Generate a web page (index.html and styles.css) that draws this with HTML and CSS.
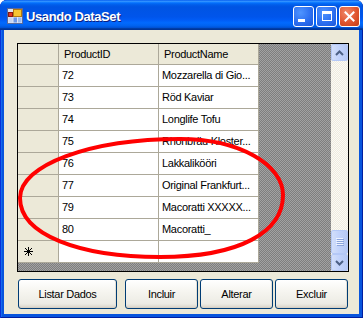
FILE: index.html
```html
<!DOCTYPE html>
<html>
<head>
<meta charset="utf-8">
<title>Usando DataSet</title>
<link rel="stylesheet" href="styles.css">
</head>
<body>
<div class="window">
  <div class="titlebar">
    <svg class="appicon" width="16" height="16" viewBox="0 0 16 16">
      <rect x="0.5" y="0.5" width="15" height="15" fill="#dfe6f5" stroke="#5a6a9a"/>
      <rect x="6.5" y="1.5" width="8" height="7" fill="#f7c531" stroke="#b47a10"/>
      <rect x="1.5" y="4.5" width="4" height="4" fill="#e2341f" stroke="#8a1a10"/>
      <rect x="6.5" y="9.5" width="3.5" height="5" fill="#6f97e6"/>
      <rect x="11" y="9.5" width="3.5" height="5" fill="#9cbcf2"/>
      <rect x="1.5" y="9.5" width="4" height="5" fill="#c9d6f2"/>
    </svg>
    <span class="title">Usando DataSet</span>
    <div class="tbtns">
      <div class="tbtn"><span class="g-min"></span></div>
      <div class="tbtn"><span class="g-max"></span></div>
      <div class="tbtn close">
        <svg width="11" height="11" viewBox="0 0 11 11"><path d="M1.5 1.5L9.5 9.5M9.5 1.5L1.5 9.5" stroke="#fff" stroke-width="2" stroke-linecap="square"/></svg>
      </div>
    </div>
  </div>
  <div class="client">
    <div class="grid">
      <div class="view">
        <div class="table">
          <div class="row head"><div class="rh"></div><div class="c">ProductID</div><div class="c">ProductName</div></div>
          <div class="row"><div class="rh"></div><div class="c">72</div><div class="c">Mozzarella di Gio...</div></div>
          <div class="row"><div class="rh"></div><div class="c">73</div><div class="c">Röd Kaviar</div></div>
          <div class="row"><div class="rh"></div><div class="c">74</div><div class="c">Longlife Tofu</div></div>
          <div class="row"><div class="rh"></div><div class="c">75</div><div class="c">Rhönbräu Kloster...</div></div>
          <div class="row"><div class="rh"></div><div class="c">76</div><div class="c">Lakkalikööri</div></div>
          <div class="row"><div class="rh"></div><div class="c">77</div><div class="c">Original Frankfurt...</div></div>
          <div class="row"><div class="rh"></div><div class="c">79</div><div class="c">Macoratti XXXXX...</div></div>
          <div class="row"><div class="rh"></div><div class="c">80</div><div class="c">Macoratti_</div></div>
          <div class="row"><div class="rh">
            <svg class="star" width="9" height="9" viewBox="0 0 9 9"><path d="M4.5 0V9M0 4.5H9M1 1L8 8M8 1L1 8" stroke="#000" stroke-width="1"/></svg>
          </div><div class="c"></div><div class="c"></div></div>
        </div>
      </div>
      <div class="vscroll">
        <div class="sbtn">
          <svg width="9" height="6" viewBox="0 0 9 6"><path d="M1 5L4.5 1.5L8 5" fill="none" stroke="#4d6185" stroke-width="2"/></svg>
        </div>
        <div class="track"></div>
        <div class="thumb">
          <svg width="8" height="8" viewBox="0 0 8 8"><path d="M0 0.5H7M0 2.5H7M0 4.5H7M0 6.5H7" stroke="#eef3ff" stroke-width="1"/><path d="M1 1.5H8M1 3.5H8M1 5.5H8M1 7.5H8" stroke="#8ca5dc" stroke-width="1"/></svg>
        </div>
        <div class="sbtn">
          <svg width="9" height="6" viewBox="0 0 9 6"><path d="M1 1L4.5 4.5L8 1" fill="none" stroke="#4d6185" stroke-width="2"/></svg>
        </div>
      </div>
    </div>
    <div class="buttons">
      <div class="btn wide">Listar Dados</div>
      <div class="btn">Incluir</div>
      <div class="btn">Alterar</div>
      <div class="btn">Excluir</div>
    </div>
  </div>
  <svg class="annot" width="363" height="318" viewBox="0 0 363 318">
    <path d="M20 198C20 165 90 139 180 139C240 139 283 165 283 195C283 232 240 257 160 257C80 257 20 235 20 198Z" fill="none" stroke="#ff0000" stroke-width="4"/>
  </svg>
</div>
</body>
</html>
```

FILE: styles.css
```css
* { box-sizing: border-box; }
html, body { margin: 0; padding: 0; }
body {
  width: 363px;
  height: 318px;
  overflow: hidden;
  background: #ffffff;
  font-family: "Liberation Sans", Arial, sans-serif;
  font-size: 11px;
  letter-spacing: -0.3px;
  color: #000;
}
.window {
  position: relative;
  width: 363px;
  height: 318px;
  display: flex;
  flex-direction: column;
  background: #0855dd;
  box-shadow: inset 1px 0 0 #0831d9, inset -1px 0 0 #001ea0, inset 0 -1px 0 #001ea0, inset 2px 0 0 #166aee;
  border-radius: 7px 7px 0 0;
  overflow: hidden;
}
.titlebar {
  height: 30px;
  flex: none;
  display: flex;
  align-items: center;
  padding: 2px 3px 0 7px;
  background: linear-gradient(to bottom, #0058ee 0%, #3593ff 4%, #288eff 6%, #127dff 8%, #036ffc 10%, #0262ee 14%, #0057e5 20%, #0054e3 24%, #0055eb 56%, #005bf5 66%, #026afe 76%, #0062ef 86%, #0052d6 92%, #0040ab 94%, #003092 100%);
  border-radius: 7px 7px 0 0;
}
.appicon { flex: none; margin-right: 3px; }
.title {
  color: #fff;
  font-weight: bold;
  font-size: 13px;
  letter-spacing: -0.4px;
  text-shadow: 1px 1px 0 #0a1e80;
}
.tbtns {
  margin-left: auto;
  display: flex;
  gap: 2px;
}
.tbtn {
  width: 21px;
  height: 21px;
  border: 1px solid #fff;
  border-radius: 3px;
  background: radial-gradient(circle at 35% 30%, #4f94ff 0%, #2d6ff0 55%, #1b56d8 100%);
  position: relative;
  display: flex;
  align-items: center;
  justify-content: center;
}
.tbtn.close {
  background: radial-gradient(circle at 35% 30%, #f08a6a 0%, #e0552f 55%, #c43d14 100%);
}
.g-min {
  position: absolute;
  left: 4px;
  top: 12px;
  width: 7px;
  height: 3px;
  background: #fff;
}
.g-max {
  width: 10px;
  height: 10px;
  border: 1px solid #fff;
  border-top-width: 3px;
}
.client {
  flex: 1;
  margin: 0 4px 4px 4px;
  background: #ece9d8;
  padding: 13px 10px 0 13px;
  display: flex;
  flex-direction: column;
}
.grid {
  width: 332px;
  height: 229px;
  border: 1px solid #000;
  display: flex;
  flex: none;
}
.view {
  flex: 1;
  background: repeating-conic-gradient(#7e7e7e 0% 25%, #a2a2a2 0% 50%) 0 0 / 2px 2px;
}
.table { width: 241px; }
.row { display: flex; height: 22px; }
.row.head { height: 21px; }
.rh {
  width: 41px;
  background: #ece9d8;
  border-right: 1px solid #aca899;
  border-bottom: 1px solid #aca899;
  padding: 6px 0 0 6px;
}
.c {
  width: 100px;
  background: #fff;
  border-right: 1px solid #aca899;
  border-bottom: 1px solid #aca899;
  padding-left: 3px;
  line-height: 21px;
  white-space: nowrap;
  overflow: hidden;
}
.head .c {
  background: #ece9d8;
  padding-left: 5px;
  line-height: 20px;
}
.star { display: block; }
.vscroll {
  width: 17px;
  flex: none;
  display: flex;
  flex-direction: column;
  background: repeating-conic-gradient(#fbfaf6 0% 25%, #eeebdf 0% 50%) 0 0 / 2px 2px;
}
.sbtn, .thumb {
  flex: none;
  border: 1px solid #b4c8f6;
  border-radius: 2px;
  background: linear-gradient(to right, #d2def9, #c1d2fb 50%, #b7c9f4);
  display: flex;
  align-items: center;
  justify-content: center;
}
.sbtn { height: 17px; }
.track { flex: 1; }
.thumb { height: 24px; }
.buttons {
  display: flex;
  gap: 2px;
  margin-top: 7px;
  padding-left: 1px;
}
.btn {
  width: 73px;
  height: 30px;
  border: 1px solid #003c74;
  border-radius: 3px;
  background: linear-gradient(to bottom, #ffffff 0%, #f6f5f0 40%, #ecebe4 85%, #d8d2c6 100%);
  box-shadow: inset 0 -1px 0 #d6d0c5, inset -1px 0 0 #e3e0d6;
  display: flex;
  align-items: center;
  justify-content: center;
}
.btn.wide {
  width: 99px;
  margin-right: 6px;
}
.annot {
  position: absolute;
  left: 0;
  top: 0;
  pointer-events: none;
}
```
